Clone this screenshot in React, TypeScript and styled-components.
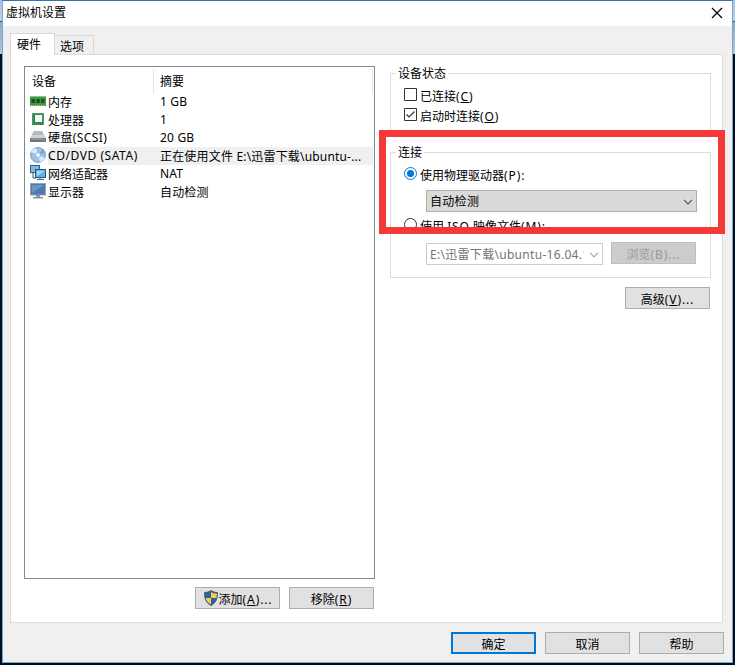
import React from "react";
import styled, { createGlobalStyle, css } from "styled-components";

const Global = createGlobalStyle`
  * { box-sizing: border-box; }
  body { margin: 0; background: #000d20; }
`;

const Desktop = styled.div`
  width: 735px;
  height: 665px;
  padding: 0 2px 2px;
  overflow: hidden;
  color: #000;
  font: 12px/18px "Noto Sans", "Noto Sans CJK SC", sans-serif;
  background:
    linear-gradient(#2c587f, #2c587f) 0 21px / 100% 1px no-repeat,
    linear-gradient(#a9c3e0, #bdd0e6 21px, #8fa9c8 22px, #b5c3d8 54px) 0 0 / 100% 54px no-repeat,
    #000d20;
`;

const Window = styled.div`
  position: relative;
  height: 663px;
  display: flex;
  flex-direction: column;
  background: #f0f0f0;
  border: 1px solid #74a9cf;
  border-top-color: #2f76b0;
`;

const TitleBar = styled.header`
  display: flex;
  justify-content: space-between;
  height: 25px;
  padding: 3px 9px 0 3px;
  background: #fff;
`;

const CloseIcon = styled.svg`
  width: 12px;
  height: 12px;
  margin-top: 3px;
`;

const Tabs = styled.nav`
  display: flex;
  align-items: flex-end;
  height: 28px;
  padding-left: 7px;
`;

const Tab = styled.div<{ $active?: boolean }>`
  border: 1px solid #d9d9d9;
  border-bottom: 0;
  ${(p) =>
    p.$active
      ? css`
          width: 45px;
          height: 22px;
          padding: 2px 0 0 6px;
          margin-bottom: -1px;
          background: #fff;
          z-index: 1;
        `
      : css`
          width: 39px;
          height: 19px;
          padding: 1px 0 0 5px;
          border-left: 0;
          line-height: 19px;
        `}
`;

const Page = styled.main`
  display: flex;
  height: 569px;
  margin: 0 9px 0 7px;
  padding: 11px 11px 0 13px;
  background: #fff;
  border: 1px solid #dcdcdc;
`;

const DevicePane = styled.section`
  width: 351px;
  margin-right: 15px;
`;

const DeviceList = styled.div`
  height: 513px;
  padding: 2px 1px;
  border: 1px solid #828790;
`;

const ListHeader = styled.div`
  display: grid;
  grid-template-columns: 128px 1fr;
  height: 24px;
  line-height: 25px;
`;

const HeadCell = styled.div`
  padding-left: 6px;
  border-right: 1px solid #e5e5e5;
`;

const DeviceRow = styled.div<{ $selected?: boolean }>`
  display: grid;
  grid-template-columns: 22px 106px 1fr;
  height: 18px;
  white-space: nowrap;
  > :nth-child(n + 2) {
    background: ${(p) => (p.$selected ? "#f0f0f0" : "transparent")};
  }
`;

const Glyph = styled.svg`
  width: 16px;
  height: 16px;
  margin: 0 0 0 4px;
`;

const Cell = styled.div<{ $spacing?: number; $indent?: number; $low?: boolean }>`
  height: 18px;
  padding-left: ${(p) => p.$indent ?? 0}px;
  line-height: ${(p) => (p.$low ? 20 : 18)}px;
  letter-spacing: ${(p) => p.$spacing ?? 0}px;
`;

const ButtonRow = styled.div<{ $top: number; $right?: number }>`
  display: flex;
  justify-content: flex-end;
  gap: 9px;
  margin: ${(p) => p.$top}px ${(p) => p.$right ?? 0}px 0 0;
`;

const Button = styled.button<{ $kind?: "primary" | "disabled" }>`
  display: flex;
  align-items: center;
  justify-content: center;
  width: 85px;
  height: 22px;
  padding: 3px 0 0;
  font: inherit;
  white-space: nowrap;
  color: ${(p) => (p.$kind === "disabled" ? "#9a9a9a" : "#000")};
  background: ${(p) => (p.$kind === "disabled" ? "#cccccc" : "#e1e1e1")};
  border: ${(p) =>
    p.$kind === "primary"
      ? "2px solid #0078d7"
      : p.$kind === "disabled"
        ? "1px solid #bfbfbf"
        : "1px solid #adadad"};
`;

const Shield = styled.svg`
  width: 16px;
  height: 16px;
  margin-top: -4px;
`;

const Latin = styled.span`
  letter-spacing: 0.9px;
`;

const SettingsPane = styled.section`
  width: 321px;
`;

const Group = styled.section<{ $height: number; $top: number }>`
  height: ${(p) => p.$height}px;
  margin-top: ${(p) => p.$top}px;
  border: 1px solid #dcdcdc;
`;

const Legend = styled.div`
  width: fit-content;
  height: 18px;
  margin: -9px 0 0 5px;
  padding: 0 2px;
  background: #fff;
`;

const Option = styled.label<{ $top?: number }>`
  display: flex;
  height: 20px;
  margin-top: ${(p) => p.$top ?? 0}px;
  padding-left: 13px;
  gap: 3px;
`;

const Mark = styled.svg`
  width: 13px;
  height: 13px;
  margin-top: 1px;
`;

const Caption = styled.span`
  padding-top: 1px;
  white-space: nowrap;
`;

const FieldRow = styled.div<{ $top: number }>`
  display: flex;
  gap: 8px;
  margin: ${(p) => p.$top}px 13px 0 35px;
  > button {
    margin-top: -1px;
  }
`;

const Combo = styled.div<{ $width: number; $disabled?: boolean }>`
  display: flex;
  align-items: center;
  width: ${(p) => p.$width}px;
  height: 22px;
  padding: 1px 3px 0 3px;
  color: ${(p) => (p.$disabled ? "#747474" : "#000")};
  background: ${(p) => (p.$disabled ? "#fff" : "#dadada")};
  border: 1px solid ${(p) => (p.$disabled ? "#cccccc" : "#adadad")};
`;

const ComboText = styled.span`
  flex: 1;
  min-width: 0;
  margin-right: 5px;
  overflow: hidden;
  white-space: nowrap;
  letter-spacing: 0.3px;
`;

const Arrow = styled.svg`
  width: 10px;
  height: 6px;
`;

const Highlight = styled.div`
  position: absolute;
  left: 376px;
  top: 129px;
  width: 346px;
  height: 104px;
  border: 7px solid #f53838;
`;

const Down = ({ color }: { color: string }) => (
  <Arrow viewBox="0 0 10 6">
    <path d="M1 .8 5 4.8 9 .8" fill="none" stroke={color} strokeWidth="1.2" />
  </Arrow>
);

const glyphs: Record<string, React.ReactNode> = {
  memory: (
    <>
      <rect x="0" y="3" width="16" height="10" fill="#3f9a45" />
      <path d="M0 3.5h16" stroke="#8cc878" />
      <path d="M1.500 6h3.500v4H1.500zM6.300 6h3.500v4H6.300zM11 6h3.500v4H11z" fill="#204d2b" />
      <path d="M1 12.500h14" stroke="#c6c45d" strokeDasharray="1 1" />
    </>
  ),
  cpu: (
    <>
      <rect x="2" y="2" width="12" height="12" fill="#4a9b61" />
      <rect x="3.500" y="3.500" width="9" height="9" fill="#2c804a" />
      <rect x="5" y="4" width="7" height="7" fill="#f5faf6" />
      <path d="M2 13.500h12" stroke="#256d3d" strokeDasharray="1 1" />
    </>
  ),
  disk: (
    <>
      <path d="M4 2h8l4 7H0z" fill="#cfd1d6" />
      <path d="M4 2h8l2 4H2z" fill="#b6b8bf" />
      <path d="M0 9h16v4H0z" fill="#747782" />
      <path d="M1 10h12" stroke="#a8aab2" />
      <path d="M13 11h2" stroke="#59d263" />
    </>
  ),
  disc: (
    <>
      <circle cx="8" cy="8" r="7.500" fill="#9fc1e4" stroke="#7da3ce" />
      <path d="M8 8 1 5a8 8 0 0 1 5-4zM8 8l7 3a8 8 0 0 1-5 4z" fill="#dceafa" />
      <path d="M8 8 13 2a8 8 0 0 1 2 4z" fill="#75a4d8" />
      <circle cx="8" cy="8" r="2.500" fill="#fff" stroke="#8db4dc" />
    </>
  ),
  network: (
    <>
      <rect x=".5" y=".5" width="9" height="7" fill="#82b9df" stroke="#315d89" />
      <path d="M3 8v5h3" stroke="#46576b" fill="none" />
      <rect x="5.500" y="4.500" width="10" height="8" fill="#5eb5ed" stroke="#28557e" />
      <path d="M7 6h7L7 11z" fill="#a6dbfa" />
      <path d="M10 13v2M7 14.500h7" stroke="#3d6890" />
    </>
  ),
  display: (
    <>
      <rect x=".5" y=".5" width="15" height="11.500" fill="#4f79b4" stroke="#98a4b3" />
      <path d="M2 2h12L2 10z" fill="#6f95c8" />
      <path d="M6 12h4v2h3v1.500H3V14h3z" fill="#8993a0" />
    </>
  ),
};

const devices = [
  { icon: "memory", name: "内存", value: "1 GB", lowName: true },
  { icon: "cpu", name: "处理器", value: "1", lowName: true },
  { icon: "disk", name: "硬盘(SCSI)", value: "20 GB", spacing: 0.4 },
  {
    icon: "disc",
    name: "CD/DVD (SATA)",
    value: "正在使用文件 E:\\迅雷下载\\ubuntu-...",
    spacing: 0.55,
    lowValue: true,
    selected: true,
  },
  { icon: "network", name: "网络适配器", value: "NAT", lowName: true },
  { icon: "display", name: "显示器", value: "自动检测", lowName: true, lowValue: true },
];

export default function App() {
  return (
    <>
      <Global />
      <Desktop>
        <Window>
          <TitleBar>
            <span>虚拟机设置</span>
            <CloseIcon viewBox="0 0 12 12">
              <path d="M1 1l10 10M11 1 1 11" stroke="#000" strokeWidth="1.2" />
            </CloseIcon>
          </TitleBar>
          <Tabs>
            <Tab $active>硬件</Tab>
            <Tab>选项</Tab>
          </Tabs>
          <Page>
            <DevicePane>
              <DeviceList>
                <ListHeader>
                  <HeadCell>设备</HeadCell>
                  <HeadCell>摘要</HeadCell>
                </ListHeader>
                {devices.map((d) => (
                  <DeviceRow key={d.icon} $selected={d.selected}>
                    <Glyph viewBox="0 0 16 16">{glyphs[d.icon]}</Glyph>
                    <Cell $spacing={d.spacing} $low={d.lowName}>{d.name}</Cell>
                    <Cell $spacing={0.18} $indent={6} $low={d.lowValue}>{d.value}</Cell>
                  </DeviceRow>
                ))}
              </DeviceList>
              <ButtonRow $top={8} $right={1}>
                <Button>
                  <Shield viewBox="0 0 16 16">
                    <path d="M8 .5C6 2 3.500 2.500 1.500 2.500 1.300 8 3 13 8 15.500 13 13 14.700 8 14.500 2.500 12.500 2.500 10 2 8 .5z" fill="#2c5f9e" />
                    <path d="M8 2v6h5.500c.4-1.500.5-3 .4-4.500C11.500 3.500 9.500 3 8 2zM8 8v6.500C5 13 3.200 10.500 2.500 8z" fill="#f5ce45" />
                    <path d="M8 .5C6 2 3.500 2.500 1.500 2.500 1.300 8 3 13 8 15.500 13 13 14.700 8 14.500 2.500 12.500 2.500 10 2 8 .5z" fill="none" stroke="#495970" />
                  </Shield>
                  <span>添加<Latin>(<u>A</u>)...</Latin></span>
                </Button>
                <Button><span>移除<Latin>(<u>R</u>)</Latin></span></Button>
              </ButtonRow>
            </DevicePane>
            <SettingsPane>
              <Group $top={7} $height={60}>
                <Legend>设备状态</Legend>
                <Option $top={4}>
                  <Mark viewBox="0 0 13 13">
                    <path d="M.5.5h12v12H.5z" fill="#fff" stroke="#333" />
                  </Mark>
                  <Caption>已连接<Latin>(<u>C</u>)</Latin></Caption>
                </Option>
                <Option>
                  <Mark viewBox="0 0 13 13">
                    <path d="M.5.5h12v12H.5z" fill="#fff" stroke="#333" />
                    <path d="M2.500 6.500 5 9l5.500-5.500" fill="none" stroke="#333" strokeWidth="1.200" />
                  </Mark>
                  <Caption>启动时连接<Latin>(<u>O</u>)</Latin></Caption>
                </Option>
              </Group>
              <Group $top={19} $height={126}>
                <Legend>连接</Legend>
                <Option $top={4}>
                  <Mark viewBox="0 0 13 13">
                    <circle cx="6.500" cy="6.500" r="6" fill="#fff" stroke="#0078d7" />
                    <circle cx="6.500" cy="6.500" r="3.500" fill="#0078d7" />
                  </Mark>
                  <Caption>使用物理驱动器<Latin>(P):</Latin></Caption>
                </Option>
                <FieldRow $top={4}>
                  <Combo $width={271}>
                    <ComboText>自动检测</ComboText>
                    <Down color="#555" />
                  </Combo>
                </FieldRow>
                <Option $top={5}>
                  <Mark viewBox="0 0 13 13">
                    <circle cx="6.500" cy="6.500" r="6" fill="#fff" stroke="#333" />
                  </Mark>
                  <Caption>使用 <Latin>ISO</Latin> 映像文件<Latin>(M):</Latin></Caption>
                </Option>
                <FieldRow $top={6}>
                  <Combo $width={177} $disabled>
                    <ComboText>E:\迅雷下载\ubuntu-16.04.1</ComboText>
                    <Down color="#aaa" />
                  </Combo>
                  <Button $kind="disabled"><span>浏览<Latin>(B)...</Latin></span></Button>
                </FieldRow>
              </Group>
              <ButtonRow $top={9} $right={1}>
                <Button><span>高级<Latin>(<u>V</u>)...</Latin></span></Button>
              </ButtonRow>
            </SettingsPane>
          </Page>
          <ButtonRow $top={9} $right={8}>
            <Button $kind="primary">确定</Button>
            <Button>取消</Button>
            <Button>帮助</Button>
          </ButtonRow>
          <Highlight />
        </Window>
      </Desktop>
    </>
  );
}
